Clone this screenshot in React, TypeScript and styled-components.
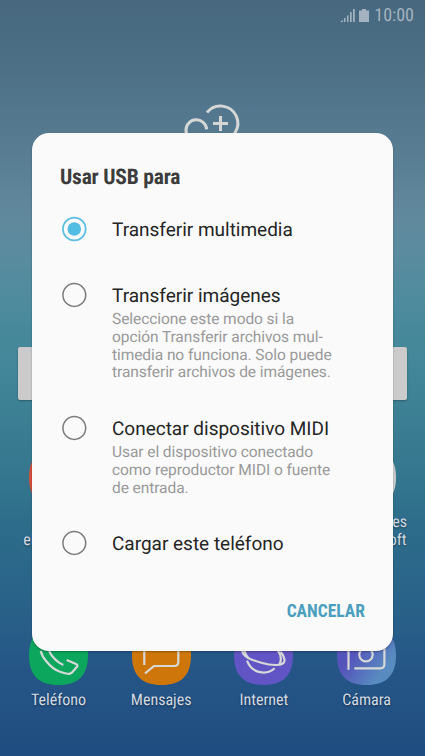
import React from "react";
import styled, { createGlobalStyle } from "styled-components";

const GlobalStyle = createGlobalStyle`
  * { box-sizing: border-box; }
  html, body { margin: 0; padding: 0; }
  body {
    font-family: Roboto, "Liberation Sans", sans-serif;
    text-rendering: geometricPrecision;
    overflow: hidden;
  }
`;

const Phone = styled.main`
  position: relative;
  display: flex;
  flex-direction: column;
  width: 425px;
  height: 756px;
  overflow: hidden;
  background: linear-gradient(
    180deg,
    #47687f 0%, #4d7087 9%, #587d93 20%, #61899e 29%, #588c9f 35%,
    #488a9c 43%, #418598 50%, #377a90 60%, #2d6c8a 70%, #296289 80%, #255586 89%, #204d81 100%
  );
`;

const StatusBar = styled.header`
  display: flex;
  align-items: center;
  justify-content: flex-end;
  height: 31px;
  padding-right: 11px;
  gap: 5px;
  color: #a4b3bf;
`;

const Condensed = styled.span<{ $size: number; $spacing?: number }>`
  font-family: "Roboto Condensed", Roboto, sans-serif;
  font-stretch: 75%;
  font-size: ${(p) => p.$size}px;
  letter-spacing: ${(p) => p.$spacing ?? 0}px;
  white-space: nowrap;
`;

const Weather = styled.section`
  display: flex;
  justify-content: center;
  height: 316px;
  padding: 70px 1px 0 0;
`;

const SearchBar = styled.div`
  height: 53px;
  margin: 0 18px 0 17.5px;
  border-radius: 2px;
  background: #cbcbcb;
  box-shadow: 0 1px 2px rgba(0, 0, 0, 0.3);
`;

const AppRow = styled.section<{ $top: number }>`
  display: grid;
  grid-template-columns: repeat(4, 102.7px);
  justify-content: center;
  padding-top: ${(p) => p.$top}px;
`;

const AppItem = styled.div`
  display: flex;
  flex-direction: column;
  align-items: center;
  color: #d3dae2;
  text-align: center;
  text-shadow: 0 1px 2px rgba(0, 0, 0, 0.45);
`;

const AppLabel = styled(Condensed)`
  margin-top: 6px;
  line-height: 18px;
  white-space: pre;
`;

const Dialog = styled.section`
  position: absolute;
  left: 32px;
  top: 133px;
  width: 361px;
  height: 518px;
  padding: 29px 28px 0;
  border-radius: 17px;
  background: #fafafa;
  box-shadow: 0 1px 2px rgba(0, 0, 0, 0.3);
`;

const Title = styled.h1`
  display: flex;
  margin: 0;
  height: 54px;
  line-height: 32px;
  font-weight: 700;
  color: #3c3c3c;
`;

const Option = styled.label<{ $height: number }>`
  display: flex;
  height: ${(p) => p.$height}px;
`;

const RadioIcon = styled.svg`
  flex: none;
  width: 28px;
  height: 28px;
  margin-top: -1px;
`;

const OptionText = styled.div`
  margin-left: 24px;
`;

const OptionTitle = styled.div`
  font-size: 19px;
  line-height: 28px;
  letter-spacing: -0.01px;
  color: #252525;
  white-space: nowrap;
`;

const Description = styled.div`
  margin-top: 1.3px;
  font-size: 15.5px;
  line-height: 17.7px;
  letter-spacing: -0.07px;
  color: #999;
  white-space: nowrap;
`;

const Line = styled.span`
  display: block;
`;

const Actions = styled.footer`
  display: flex;
  justify-content: flex-end;
`;

const CancelButton = styled.button`
  padding: 0;
  border: 0;
  background: none;
  line-height: 20px;
  font-weight: 700;
  color: #4b9fbe;
`;

function Radio({ checked }: { checked?: boolean }) {
  return (
    <RadioIcon viewBox="0 0 28 28" fill="none">
      <circle cx="14.3" cy="14" r="11.4" stroke={checked ? "#5bbfe2" : "#7b7b7b"} strokeWidth={checked ? 1.7 : 1.5} />
      {checked && <circle cx="14.3" cy="14" r="6.8" fill="#52bde2" />}
    </RadioIcon>
  );
}

const tile = "M29.5 0C49 0 59 9.5 59 29.5S49 59 29.5 59 0 49.5 0 29.5 10 0 29.5 0Z";

function Tile({ fill, children }: { fill: string; children?: React.ReactNode }) {
  return (
    <svg width="59" height="59" viewBox="0 0 59 59" fill="none">
      <defs>
        <linearGradient id="camera" x1="8" y1="15" x2="54" y2="48" gradientUnits="userSpaceOnUse">
          <stop offset="0.25" stopColor="#5554bb" />
          <stop offset="0.85" stopColor="#588bc0" />
        </linearGradient>
      </defs>
      <path d={tile} fill={fill} />
      <g stroke="#d7d9d9" strokeWidth="2.2" strokeLinejoin="round">{children}</g>
    </svg>
  );
}

const options: { title: string; height: number; lines: string[] }[] = [
  { title: "Transferir multimedia", height: 66, lines: [] },
  {
    title: "Transferir imágenes",
    height: 133,
    lines: [
      "Seleccione este modo si la",
      "opción Transferir archivos mul-",
      "timedia no funciona. Solo puede",
      "transferir archivos de imágenes.",
    ],
  },
  {
    title: "Conectar dispositivo MIDI",
    height: 115,
    lines: ["Usar el dispositivo conectado", "como reproductor MIDI o fuente", "de entrada."],
  },
  { title: "Cargar este teléfono", height: 71, lines: [] },
];

export default function App() {
  return (
    <>
      <GlobalStyle />
      <Phone>
        <StatusBar>
          <svg width="29" height="15" viewBox="0 0 29 15" fill="currentColor">
            <path d="M0 14l3-2v2ZM4 10h1.5v4H4ZM7 7.5h1.5V14H7ZM10 4h1.7v10H10ZM13 1h1.8v13H13ZM19 2.5h3V1h4v1.500h3V14H19Z" />
          </svg>
          <Condensed $size={18}>10:00</Condensed>
        </StatusBar>

        <Weather>
          <svg width="60" height="50" viewBox="0 0 60 50" fill="none" stroke="#d5d7d7" strokeWidth="3">
            <path d="M25 11.5A17.3 17.3 0 1 1 38.2 39.6H14.3A10.4 10.4 0 1 1 24.7 28.3" />
            <path d="M31 22.5h15M38.5 15v15" />
          </svg>
        </Weather>

        <SearchBar />

        <AppRow $top={48}>
          <AppItem>
            <Tile fill="#d4503c" />
            <AppLabel $size={16}>{"\nelectrónico"}</AppLabel>
          </AppItem>
          <AppItem />
          <AppItem />
          <AppItem>
            <Tile fill="#cbcbcb" />
            <AppLabel $size={16}>{"Aplicaciones\nde Microsoft"}</AppLabel>
          </AppItem>
        </AppRow>

        <AppRow $top={77}>
          <AppItem>
            <Tile fill="#0ca65c">
              <path d="M20 25C23 31 28 36 34.3 39M11.7 25C13 30 15 33 17.7 35.7C22 41 26 44 31 45.7Q36 47.5 40.3 48L43 46.5 48.3 40.5Q48.8 39 47 38L37.7 34" />
            </Tile>
            <AppLabel $size={16}>Teléfono</AppLabel>
          </AppItem>
          <AppItem>
            <Tile fill="#cf760b">
              <path d="M12.3 39V17q0-4 4-4h26q4 0 4 4v19q0 4-4 4H22L13 47.5" />
            </Tile>
            <AppLabel $size={16}>Mensajes</AppLabel>
          </AppItem>
          <AppItem>
            <Tile fill="#6154c4">
              <path d="M13 34.7C18 48 33 49.5 40.6 42.3" />
              <path d="M8.3 24C8 31 18 34 27.3 36.7S51 41 50.6 34Q50 29.5 46.6 25.7" />
              <path d="M10.6 25Q11.5 29 14 31.5M43.500 24Q49 31 45.500 38.500" />
            </Tile>
            <AppLabel $size={16}>Internet</AppLabel>
          </AppItem>
          <AppItem>
            <Tile fill="url(#camera)">
              <path d="M11.5 43.7V16H43.4q4 0 4 4v18.3q0 4-4 4H17.3" />
              <circle cx="29" cy="28.7" r="6.7" />
            </Tile>
            <AppLabel $size={16}>Cámara</AppLabel>
          </AppItem>
        </AppRow>

        <Dialog role="dialog">
          <Title><Condensed $size={21.5} $spacing={-0.2}>Usar USB para</Condensed></Title>
          {options.map((option, index) => (
            <Option key={option.title} $height={option.height}>
              <Radio checked={index === 0} />
              <OptionText>
                <OptionTitle>{option.title}</OptionTitle>
                <Description>
                  {option.lines.map((text) => (
                    <Line key={text}>{text}</Line>
                  ))}
                </Description>
              </OptionText>
            </Option>
          ))}
          <Actions>
            <CancelButton><Condensed $size={17.5}>CANCELAR</Condensed></CancelButton>
          </Actions>
        </Dialog>
      </Phone>
    </>
  );
}
